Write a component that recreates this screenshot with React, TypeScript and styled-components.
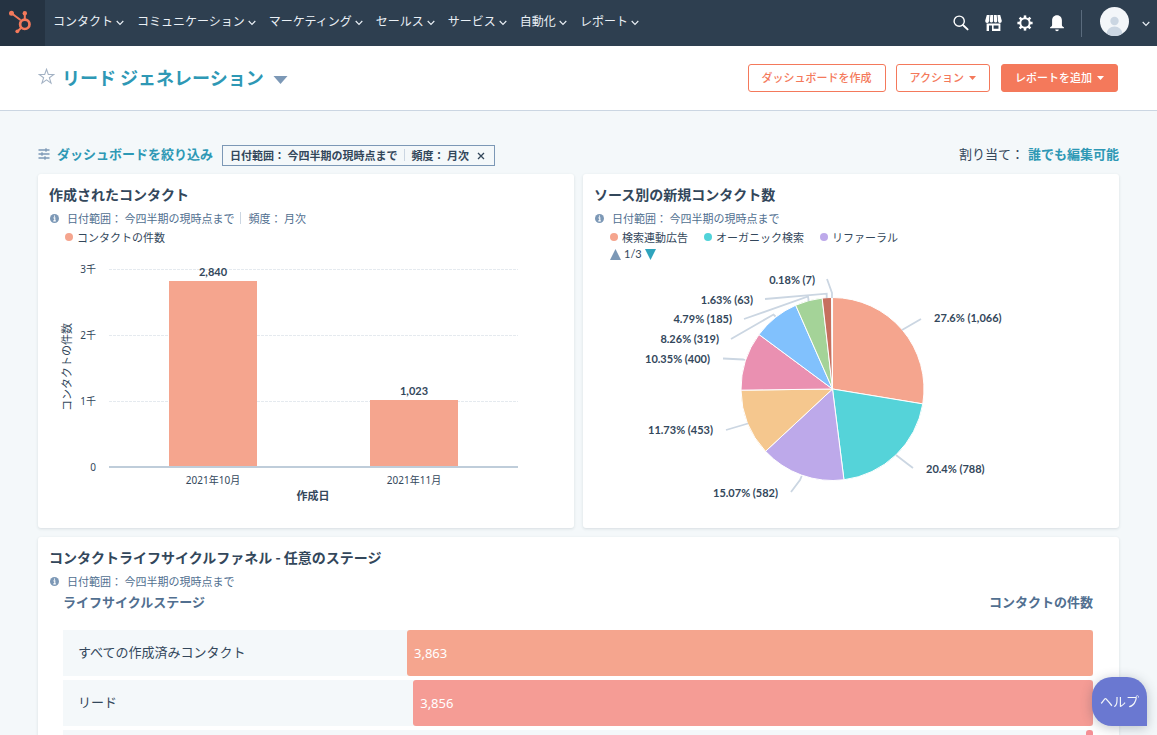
import React from "react";
import styled, { createGlobalStyle } from "styled-components";

const color = {
  ink: "#33475b",
  slate: "#516f90",
  steel: "#7c98b6",
  teal: "#2e98b5",
  orange: "#f4795b",
  line: "#cbd6e2",
  page: "#f4f8fa",
};

const jp = `"Noto Sans CJK JP", sans-serif`;
const latin = `Lato, "Noto Sans CJK JP", sans-serif`;
const axis = `"Noto Sans", "Noto Sans CJK JP", sans-serif`;

const GlobalStyle = createGlobalStyle`
  * { box-sizing: border-box; }
  body {
    margin: 0;
    background: ${color.page};
    color: ${color.ink};
    font-family: ${jp};
  }
  button { font-family: inherit; cursor: pointer; }
  a { color: inherit; text-decoration: none; }
`;

const Shell = styled.div`
  display: flex;
  flex-direction: column;
  height: 100vh;
  overflow: hidden;
`;

/* ---------- Top navigation ---------- */

const TopBar = styled.header`
  display: flex;
  flex: none;
  height: 46px;
  background: #2e3f50;
  color: #eaf0f6;
`;

const LogoLink = styled.a`
  width: 45px;
  height: 46px;
  background: #253342;
`;

const NavList = styled.nav`
  display: flex;
  flex: 1;
  padding-left: 8px;
`;

const NavButton = styled.button`
  display: flex;
  align-items: center;
  gap: 3px;
  height: 42px;
  padding: 0 13px 0 0;
  border: 0;
  background: none;
  color: inherit;
  font-size: 12px;
  line-height: 18px;
  white-space: nowrap;

  svg { margin-top: 3px; }
`;

const Tools = styled.div`
  display: flex;
  align-items: center;
  padding-right: 7px;
`;

const ToolButton = styled.button`
  display: flex;
  align-items: center;
  justify-content: center;
  width: 32px;
  height: 32px;
  padding: 0;
  border: 0;
  background: none;
  color: #fff;
`;

const Rule = styled.span`
  width: 1px;
  height: 27px;
  margin: 0 18px 0 8px;
  background: #5a6b7d;
`;

const AccountButton = styled.button`
  display: flex;
  align-items: center;
  gap: 13px;
  padding: 0 0 3px;
  border: 0;
  background: none;
  color: inherit;

  svg:last-child { margin-top: 5px; }
`;

/* ---------- Page header ---------- */

const PageHeader = styled.div`
  display: flex;
  flex: none;
  align-items: center;
  justify-content: space-between;
  height: 65px;
  padding: 0 39px 0 38px;
  border-bottom: 1px solid ${color.line};
  background: #fff;
`;

const TitleGroup = styled.div`
  display: flex;
  align-items: center;
  gap: 7px;
  padding-bottom: 3px;
`;

const IconButton = styled.button`
  display: flex;
  padding: 0;
  border: 0;
  background: none;
  color: inherit;
`;

const PageTitle = styled.h1`
  margin: 0;
  font-size: 18px;
  line-height: 28px;
`;

const TitleButton = styled.button`
  display: flex;
  align-items: center;
  gap: 9px;
  padding: 0;
  border: 0;
  background: none;
  color: ${color.teal};
  font-size: inherit;
  font-weight: bold;
  line-height: inherit;

  svg { margin-top: 6px; }
`;

const Actions = styled.div`
  display: flex;
  gap: 10px;
`;

const ActionButton = styled.button<{ $filled?: boolean }>`
  display: flex;
  align-items: center;
  gap: 5px;
  height: 28px;
  padding: 0 13px 2px;
  border: 1px solid ${color.orange};
  border-radius: 3px;
  background: ${(p) => (p.$filled ? color.orange : "#fff")};
  color: ${(p) => (p.$filled ? "#fff" : color.orange)};
  font-size: 11px;
  line-height: 16px;
  font-weight: 500;
  white-space: nowrap;

  &:last-child { margin-left: 1px; }
  svg { margin-top: 2px; }
`;

/* ---------- Filters ---------- */

const Main = styled.main`
  flex: 1;
  min-height: 0;
  padding: 34px 38px 24px;
  overflow-y: auto;
  scrollbar-width: none;
`;

const FilterBar = styled.div`
  display: flex;
  align-items: center;
  height: 21px;
  margin-bottom: 8px;
`;

const FilterButton = styled.button`
  display: flex;
  align-items: center;
  gap: 7px;
  padding: 0 0 3px;
  border: 0;
  background: none;
  color: ${color.teal};
  font-size: 13px;
  font-weight: bold;
  line-height: 18px;
  white-space: nowrap;
`;

const FilterChip = styled.div`
  display: flex;
  align-items: center;
  height: 21px;
  margin-left: 9px;
  padding: 0 9px 2px 7px;
  border: 1px solid ${color.steel};
  font-size: 11px;
  font-weight: bold;
  line-height: 16px;
  white-space: nowrap;
`;

const ChipClose = styled(IconButton)`
  margin: 2px 0 0 8px;
`;

const Divider = styled.span`
  width: 1px;
  height: 12px;
  margin: 0 7px 0 6px;
  background: ${color.line};
`;

const Assigned = styled.div`
  display: flex;
  gap: 4px;
  margin-left: auto;
  padding-bottom: 3px;
  font-size: 13px;
  line-height: 18px;

  a {
    color: ${color.teal};
    font-weight: bold;
  }
`;

/* ---------- Cards ---------- */

const CardGrid = styled.div`
  display: grid;
  grid-template-columns: 1fr 1fr;
  gap: 9px;
`;

const Card = styled.section<{ $wide?: boolean }>`
  grid-column: ${(p) => (p.$wide ? "1 / -1" : "auto")};
  min-width: 0;
  padding-top: 10px;
  border-radius: 3px;
  background: #fff;
  box-shadow: 0 1px 3px rgba(45, 62, 80, 0.14);
`;

const CardTitle = styled.h2`
  margin: 0;
  padding: 0 11px 2px;
  font-size: 14px;
  line-height: 20px;
`;

const CardMeta = styled.div`
  display: flex;
  align-items: center;
  height: 24px;
  padding: 0 12px;
  color: ${color.slate};
  font-size: 11px;
  line-height: 16px;

  svg { margin-right: 8px; }
`;

const Legend = styled.ul`
  display: flex;
  gap: 16px;
  height: 14px;
  margin: 0;
  padding: 0 27px;
  list-style: none;
  font-size: 11px;
  line-height: 14px;
`;

const LegendItem = styled.li<{ $color: string }>`
  display: flex;
  align-items: center;
  gap: 4px;

  &::before {
    content: "";
    width: 8px;
    height: 8px;
    border-radius: 50%;
    background: ${(p) => p.$color};
  }
`;

const LegendPager = styled.div`
  display: flex;
  align-items: center;
  gap: 3px;
  height: 20px;
  padding-left: 27px;
  font-family: ${latin};
  font-size: 11px;
  line-height: 16px;
`;

const Chart = styled.svg`
  display: block;
  width: 100%;
  height: auto;

  .axis { fill: ${color.ink}; font: 10px ${axis}; }
  .axisTitle { fill: ${color.ink}; font: 11px ${jp}; }
  .strong { font-weight: bold; }
  .value { fill: ${color.ink}; font: bold 11px ${latin}; }
`;

/* ---------- Funnel ---------- */

const FunnelWrap = styled.div`
  padding: 0 26px 24px 25px;
`;

const Funnel = styled.table`
  width: 100%;
  border-collapse: separate;
  border-spacing: 0;
  table-layout: fixed;
  font-size: 13px;
  line-height: 18px;

  th { padding: 0; text-align: left; }
  thead th {
    padding-bottom: 19px;
    color: ${color.slate};
    font-weight: bold;
  }
  thead th:last-child { text-align: right; }
  tbody th, td {
    height: 50px;
    padding: 0;
    border-bottom: 4px solid #fff;
    background: ${color.page};
    background-clip: padding-box;
  }
  tbody th { padding: 0 0 2px 15px; font-weight: normal; }
`;

const StageColumn = styled.col`
  width: 33.4%;
`;

const FunnelBar = styled.div<{ $color: string }>`
  height: 46px;
  margin-left: auto;
  padding-left: 7px;
  border-radius: 3px;
  background: ${(p) => p.$color};
  color: #fff;
  font-family: "Noto Sans", sans-serif;
  line-height: 46px;
  overflow: hidden;
`;

const HelpButton = styled.button`
  position: fixed;
  right: 10px;
  bottom: 9px;
  width: 55px;
  height: 49px;
  padding: 0 0 2px;
  border: 0;
  border-radius: 20px 20px 0 20px;
  background: #6a78d1;
  box-shadow: 0 2px 12px rgba(45, 62, 80, 0.3);
  color: #f5f8fa;
  font-size: 13px;
  line-height: 18px;
`;

/* ---------- Icons ---------- */

const Chevron = () => (
  <svg width="8" height="6" viewBox="0 0 8 6" fill="none" stroke="currentColor" strokeWidth="1.1">
    <path d="M0.7 1 4 4.5 7.3 1" />
  </svg>
);

const Caret = ({ width = 7, height = 4, fill = "currentColor" }) => (
  <svg width={width} height={height} viewBox="0 0 14 8" fill={fill}>
    <path d="M0 0h14L7 8z" />
  </svg>
);

const Logo = () => (
  <svg width="45" height="46" viewBox="0 0 45 46" fill={color.orange} stroke={color.orange}>
    <g strokeWidth="2">
      <path d="M11.5 13.2 20.5 20M24.8 13.5V19M17.3 31.5 21 28" fill="none" />
    </g>
    <circle cx="24.8" cy="24.3" r="4.7" fill="none" strokeWidth="2.7" />
    <circle cx="11.5" cy="13.2" r="2.5" stroke="none" />
    <circle cx="24.8" cy="13.3" r="2.2" stroke="none" />
    <circle cx="17.3" cy="31.3" r="1.9" stroke="none" />
  </svg>
);

const SearchIcon = () => (
  <svg width="16" height="16" viewBox="0 0 16 16" fill="none" stroke="currentColor" strokeLinecap="round">
    <circle cx="6.2" cy="6.2" r="5.1" strokeWidth="1.4" />
    <path d="M10.2 10.2 14.6 14.4" strokeWidth="1.9" />
  </svg>
);

const MarketIcon = () => (
  <svg width="17" height="16" viewBox="0 0 17 16" fill="currentColor">
    <path d="M1.8 0H4.6L4 6.2a1.9 1.9 0 0 1-3.8-.4zM5.3 0H8.1V6.2a1.8 1.8 0 0 1-3.4 0zM8.9 0h2.8l.6 6.2a1.8 1.8 0 0 1-3.4 0zM12.4 0h2.8l1.6 5.8a1.9 1.9 0 0 1-3.8.4z" />
    <path
      fillRule="evenodd"
      d="M1.6 8.6h13.8V16H7V10.6H4V16H1.6zM8.6 10.4v3.4h4.9v-3.4z"
    />
  </svg>
);

const GearIcon = () => (
  <svg width="16" height="16" viewBox="0 0 16 16" fill="none" stroke="currentColor">
    <circle cx="8" cy="8" r="4.7" strokeWidth="2" />
    {[0, 45, 90, 135, 180, 225, 270, 315].map((a) => (
      <path key={a} d="M8 .4V3" strokeWidth="2.5" transform={`rotate(${a} 8 8)`} />
    ))}
  </svg>
);

const BellIcon = () => (
  <svg width="14" height="17" viewBox="0 0 14 17" fill="currentColor">
    <path d="M7 .3c3.2 0 4.9 2.3 4.9 5.2v4.6c0 .9.6 1.6 2 2.2v1H.1v-1c1.4-.6 2-1.3 2-2.2V5.5C2.1 2.6 3.8.3 7 .3zM5.2 14.5h3.6a1.8 1.8 0 0 1-3.6 0z" />
  </svg>
);

const Avatar = () => (
  <svg width="29" height="29" viewBox="0 0 29 29">
    <defs>
      <clipPath id="avatarClip">
        <circle cx="14.5" cy="14.5" r="14.5" />
      </clipPath>
    </defs>
    <circle cx="14.5" cy="14.5" r="14.5" fill="#f3f6f9" />
    <g fill="#cbd6e2" clipPath="url(#avatarClip)">
      <circle cx="14.5" cy="14" r="4.2" />
      <ellipse cx="14.5" cy="27" rx="8" ry="7.5" />
    </g>
  </svg>
);

const StarIcon = () => (
  <svg width="17" height="17" viewBox="0 0 16 16" fill="none" stroke="#a3b2c4" strokeWidth="1">
    <path d="M8 1.2 9.7 6.1H14.9L10.7 9.2 12.3 14.3 8 11.2 3.7 14.3 5.3 9.2 1.1 6.1H6.3z" />
  </svg>
);

const SlidersIcon = () => (
  <svg width="12" height="12" viewBox="0 0 12 12" stroke={color.steel} strokeWidth="1.3">
    <path d="M.5 2H11.500M.5 6H11.500M.5 10H11.500M8 .3v3.400M4 4.300v3.400M7 8.300v3.400" />
  </svg>
);

const InfoIcon = () => (
  <svg width="9" height="9" viewBox="0 0 9 9">
    <circle cx="4.5" cy="4.5" r="4.5" fill={color.steel} />
    <path d="M3.5 3.9H4.8V6.7M3.3 6.9H5.8M4.5 1.6V2.8" stroke="#fff" strokeWidth="1.1" fill="none" />
  </svg>
);

const CloseIcon = () => (
  <svg width="8" height="8" viewBox="0 0 8 8" stroke={color.ink} strokeWidth="1.3">
    <path d="M1 1 7 7M7 1 1 7" />
  </svg>
);

/* ---------- Data ---------- */

const navItems = ["コンタクト", "コミュニケーション", "マーケティング", "セールス", "サービス", "自動化", "レポート"];

const bars = [
  { label: "2021年10月", value: "2,840", x: 131, top: 37 },
  { label: "2021年11月", value: "1,023", x: 332, top: 156 },
];

const ticks = [
  { label: "3千", y: 25 },
  { label: "2千", y: 91 },
  { label: "1千", y: 157 },
  { label: "0", y: 223 },
];

type Slice = {
  share: number;
  fill: string;
  label: string;
  x: number;
  y: number;
  right?: boolean;
  line: string;
};

const slices: Slice[] = [
  { share: 27.6, fill: "#f5a58e", label: "27.6% (1,066)", x: 351, y: 58, right: true, line: "M319 66 338 55" },
  { share: 20.4, fill: "#55d3d9", label: "20.4% (788)", x: 343, y: 209, right: true, line: "M313 191 324 199.5 330 204" },
  { share: 15.07, fill: "#bda9ea", label: "15.07% (582)", x: 195, y: 233, line: "M218.7 212 217 216 208 228" },
  { share: 11.73, fill: "#f5c78e", label: "11.73% (453)", x: 130, y: 170, line: "M165 159.5 143 166" },
  { share: 10.35, fill: "#ea90b1", label: "10.35% (400)", x: 127, y: 99, line: "M162 96 160 95.5 140 94.5" },
  { share: 8.26, fill: "#81c1fd", label: "8.26% (319)", x: 136, y: 79, line: "M192.5 52.5 190.5 50.5 148 75" },
  { share: 4.79, fill: "#a4d398", label: "4.79% (185)", x: 149, y: 59, line: "M225.7 37 225 32.5 161 55" },
  { share: 1.63, fill: "#c66f5e", label: "1.63% (63)", x: 170, y: 40, line: "M243.7 34 243.7 29.7 182 35" },
  { share: 0.18, fill: "#4fae94", label: "0.18% (7)", x: 232, y: 20, line: "M249 34 249 29 244 15" },
];

const funnelRows = [
  { id: "all", stage: "すべての作成済みコンタクト", count: "3,863", fill: "#f5a58e", width: 100 },
  { id: "lead", stage: "リード", count: "3,856", fill: "#f59c95", width: 99.1 },
  { id: "next", stage: "", count: "", fill: "#f58f95", width: 1 },
];

const center = { x: 249.5, y: 125, r: 91.5 };

function arcs() {
  let from = 0;
  return slices.map((s) => {
    const to = from + s.share / 100;
    const point = (t: number) => {
      const a = t * 2 * Math.PI - Math.PI / 2;
      return `${center.x + center.r * Math.cos(a)} ${center.y + center.r * Math.sin(a)}`;
    };
    const d = `M${center.x} ${center.y}L${point(from)}A${center.r} ${center.r} 0 0 1 ${point(to)}Z`;
    from = to;
    return d;
  });
}

/* ---------- Charts ---------- */

const BarChart = () => (
  <Chart viewBox="0 0 536 284" role="img" aria-label="作成されたコンタクト">
    {ticks.map((t) => (
      <g key={t.label}>
        {t.y < 223 && <path d={`M71 ${t.y + 0.5}H480`} stroke="#e5eaef" strokeDasharray="3 1" />}
        <text className="axis" x="58" y={t.y + 4} textAnchor="end">{t.label}</text>
      </g>
    ))}
    <path d="M71 223H480" stroke="#bfcdda" strokeWidth="2" />
    {bars.map((b) => (
      <g key={b.label}>
        <rect x={b.x} y={b.top} width="88" height={222 - b.top} fill="#f5a58e" />
        <text className="value" x={b.x + 44} y={b.top - 5} textAnchor="middle">{b.value}</text>
        <text className="axis" x={b.x + 44} y="240" textAnchor="middle">{b.label}</text>
      </g>
    ))}
    <text className="axisTitle" transform="translate(33 123) rotate(-90)" textAnchor="middle">コンタクトの件数</text>
    <text className="axisTitle strong" x="275" y="256" textAnchor="middle">作成日</text>
  </Chart>
);

const PieChart = () => {
  const paths = arcs();
  return (
    <Chart viewBox="0 0 536 264" role="img" aria-label="ソース別の新規コンタクト数">
      {slices.map((s, i) => (
        <path key={s.label} d={paths[i]} fill={s.fill} stroke="#fff" strokeWidth="1" strokeLinejoin="round" />
      ))}
      {slices.map((s) => (
        <g key={s.label}>
          <path d={s.line} fill="none" stroke={color.line} strokeWidth="1.8" />
          <text className="value" x={s.x} y={s.y} textAnchor={s.right ? "start" : "end"}>{s.label}</text>
        </g>
      ))}
    </Chart>
  );
};

export default function App() {
  return (
    <Shell>
      <GlobalStyle />
      <TopBar>
        <LogoLink href="#" aria-label="HubSpot"><Logo /></LogoLink>
        <NavList>
          {navItems.map((item) => (
            <NavButton key={item} type="button">{item}<Chevron /></NavButton>
          ))}
        </NavList>
        <Tools>
          <ToolButton type="button" aria-label="検索"><SearchIcon /></ToolButton>
          <ToolButton type="button" aria-label="マーケットプレイス"><MarketIcon /></ToolButton>
          <ToolButton type="button" aria-label="設定"><GearIcon /></ToolButton>
          <ToolButton type="button" aria-label="通知"><BellIcon /></ToolButton>
          <Rule />
          <AccountButton type="button" aria-label="アカウント"><Avatar /><Chevron /></AccountButton>
        </Tools>
      </TopBar>

      <PageHeader>
        <TitleGroup>
          <IconButton type="button" aria-label="お気に入り"><StarIcon /></IconButton>
          <PageTitle>
            <TitleButton type="button">
              リード ジェネレーション
              <Caret width={15} height={8} fill={color.steel} />
            </TitleButton>
          </PageTitle>
        </TitleGroup>
        <Actions>
          <ActionButton type="button">ダッシュボードを作成</ActionButton>
          <ActionButton type="button">アクション<Caret /></ActionButton>
          <ActionButton type="button" $filled>レポートを追加<Caret /></ActionButton>
        </Actions>
      </PageHeader>

      <Main>
        <FilterBar>
          <FilterButton type="button"><SlidersIcon />ダッシュボードを絞り込み</FilterButton>
          <FilterChip>
            日付範囲： 今四半期の現時点まで
            <Divider />
            頻度： 月次
            <ChipClose type="button" aria-label="フィルターを削除">
              <CloseIcon />
            </ChipClose>
          </FilterChip>
          <Assigned>
            <span>割り当て：</span>
            <a href="#">誰でも編集可能</a>
          </Assigned>
        </FilterBar>

        <CardGrid>
          <Card>
            <CardTitle>作成されたコンタクト</CardTitle>
            <CardMeta><InfoIcon />日付範囲： 今四半期の現時点まで<Divider />頻度： 月次</CardMeta>
            <Legend>
              <LegendItem $color="#f5a58e">コンタクトの件数</LegendItem>
            </Legend>
            <BarChart />
          </Card>

          <Card>
            <CardTitle>ソース別の新規コンタクト数</CardTitle>
            <CardMeta><InfoIcon />日付範囲： 今四半期の現時点まで</CardMeta>
            <Legend>
              <LegendItem $color="#f5a58e">検索連動広告</LegendItem>
              <LegendItem $color="#51d3d9">オーガニック検索</LegendItem>
              <LegendItem $color="#bda9ea">リファーラル</LegendItem>
            </Legend>
            <LegendPager>
              <IconButton type="button" aria-label="前へ">
                <svg width="11" height="11" viewBox="0 0 11 11" fill={color.steel}><path d="M5.5 0 11 11H0z" /></svg>
              </IconButton>
              1/3
              <IconButton type="button" aria-label="次へ">
                <svg width="11" height="11" viewBox="0 0 11 11" fill="#2fa4bd"><path d="M0 0H11L5.5 11z" /></svg>
              </IconButton>
            </LegendPager>
            <PieChart />
          </Card>

          <Card $wide>
            <CardTitle>コンタクトライフサイクルファネル - 任意のステージ</CardTitle>
            <CardMeta><InfoIcon />日付範囲： 今四半期の現時点まで</CardMeta>
            <FunnelWrap>
              <Funnel>
                <colgroup>
                  <StageColumn />
                  <col />
                </colgroup>
                <thead>
                  <tr>
                    <th scope="col">ライフサイクルステージ</th>
                    <th scope="col">コンタクトの件数</th>
                  </tr>
                </thead>
                <tbody>
                  {funnelRows.map((r) => (
                    <tr key={r.id}>
                      <th scope="row">{r.stage}</th>
                      <td>
                        <FunnelBar $color={r.fill} style={{ width: `${r.width}%` }}>{r.count}</FunnelBar>
                      </td>
                    </tr>
                  ))}
                </tbody>
              </Funnel>
            </FunnelWrap>
          </Card>
        </CardGrid>
      </Main>

      <HelpButton type="button">ヘルプ</HelpButton>
    </Shell>
  );
}
